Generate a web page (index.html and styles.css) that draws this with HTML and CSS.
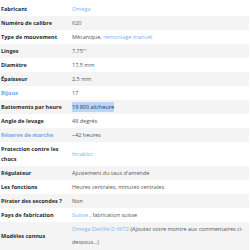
FILE: index.html
```html
<!DOCTYPE html>
<html lang="fr">
<head>
<meta charset="utf-8">
<link rel="stylesheet" href="styles.css">
</head>
<body>
<div class="specs">
  <div class="row"><div class="lbl">Fabricant</div><div class="val"><a>Oméga</a></div></div>
  <div class="row"><div class="lbl">Numéro de calibre</div><div class="val">620</div></div>
  <div class="row"><div class="lbl">Type de mouvement</div><div class="val">Mécanique, <a>remontage manuel</a></div></div>
  <div class="row"><div class="lbl">Linges</div><div class="val">7,75'''</div></div>
  <div class="row"><div class="lbl">Diamètre</div><div class="val">17,5 mm</div></div>
  <div class="row"><div class="lbl">Épaisseur</div><div class="val">2,5 mm</div></div>
  <div class="row"><div class="lbl"><a>Bijoux</a></div><div class="val">17</div></div>
  <div class="row"><div class="lbl">Battements par heure</div><div class="val"><span class="sel">19 800 alt/heure</span></div></div>
  <div class="row"><div class="lbl">Angle de levage</div><div class="val">48 degrés</div></div>
  <div class="row"><div class="lbl"><a>Réserve de marche</a></div><div class="val">~42 heures</div></div>
  <div class="row"><div class="lbl">Protection contre les chocs</div><div class="val"><a>Incabloc</a></div></div>
  <div class="row"><div class="lbl">Régulateur</div><div class="val">Ajustement du taux d'amende</div></div>
  <div class="row"><div class="lbl">Les fonctions</div><div class="val">Heures centrales, minutes centrales</div></div>
  <div class="row"><div class="lbl">Pirater des secondes ?</div><div class="val">Non</div></div>
  <div class="row"><div class="lbl">Pays de fabrication</div><div class="val"><a>Suisse</a> , fabrication suisse</div></div>
  <div class="row"><div class="lbl">Modèles connus</div><div class="val tall"><a>Omega DeVille D 6672</a> (Ajoutez votre montre aux commentaires ci-dessous...)</div></div>
</div>
</body>
</html>
```
FILE: styles.css
```css
html, body {
  margin: 0;
  padding: 0;
  background: #ffffff;
}
body {
  font-family: "Open Sans", "Liberation Sans", sans-serif;
  font-size: 5.5px;
  color: #555555;
}
.specs {
  padding-top: 2px;
  width: 249px;
}
.row {
  display: grid;
  grid-template-columns: 71px 1fr;
  align-items: center;
}
.row:nth-child(even) {
  background: #f4f4f4;
}
.lbl {
  font-weight: 700;
  color: #2a2a2a;
  padding: 2px 1px;
  line-height: 10px;
}
.val {
  padding: 2px 0 2px 1px;
  line-height: 10px;
}
.val.tall {
  line-height: 13px;
  padding: 1px 0 1px 1px;
}
a {
  color: #7cb4ee;
}
.lbl a {
  color: #6fa8e8;
}
.sel {
  background: #b9d6f7;
  color: #333;
  padding: 1px 0;
}
```
